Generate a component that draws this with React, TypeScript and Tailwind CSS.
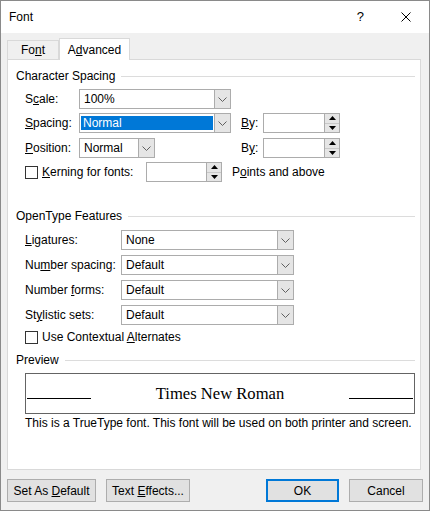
import React from 'react';

// Small down chevron used in combo buttons
function Chevron() {
  return (
    <svg width="9" height="5" viewBox="0 0 9 5" fill="none">
      <path d="M0.5 0.5 L4.5 4.5 L8.5 0.5" stroke="#606060" strokeWidth="1" />
    </svg>
  );
}

interface ComboProps {
  className: string;
  value: string;
  selected?: boolean;
}

function Combo({ className, value, selected = false }: ComboProps) {
  return (
    <div className={`flex h-[20px] border border-[#acacac] bg-white ${className}`}>
      <div className="flex-1 flex items-center pl-[1px] pr-[1px]">
        {selected ? (
          <span className="flex-1 h-[14px] leading-[14px] bg-[#0078d7] text-white pl-[2px]">{value}</span>
        ) : (
          <span className="pl-[3px]">{value}</span>
        )}
      </div>
      <div className="w-[16px] bg-[#e5e5e5] border-l border-[#acacac] flex items-center justify-center">
        <Chevron />
      </div>
    </div>
  );
}

function Spinner({ className }: { className: string }) {
  return (
    <div className={`flex h-[20px] border border-[#acacac] bg-white ${className}`}>
      <div className="flex-1" />
      <div className="w-[15px] flex flex-col border-l border-[#acacac] bg-[#e5e5e5]">
        <div className="flex-1 flex items-center justify-center border-b border-[#c8c8c8]">
          <svg width="7" height="4" viewBox="0 0 7 4">
            <path d="M0 4 L3.5 0 L7 4Z" fill="#000" />
          </svg>
        </div>
        <div className="flex-1 flex items-center justify-center">
          <svg width="7" height="4" viewBox="0 0 7 4">
            <path d="M0 0 L3.5 4 L7 0Z" fill="#000" />
          </svg>
        </div>
      </div>
    </div>
  );
}

function Checkbox() {
  return <div className="w-[13px] h-[13px] border border-[#333] bg-white shrink-0" />;
}

function GroupHeader({ children, className }: { children: React.ReactNode; className: string }) {
  return (
    <div className={`flex items-center h-[16px] pl-[8px] pr-[5px] ${className}`}>
      <span>{children}</span>
      <div className="flex-1 h-px bg-[#dcdcdc] ml-[6px]" />
    </div>
  );
}

function DialogButton({ className, children }: { className: string; children: React.ReactNode }) {
  return (
    <div className={`h-[23px] flex items-center justify-center bg-[#e1e1e1] ${className}`}>
      {children}
    </div>
  );
}

export default function App() {
  return (
    <div className="w-[430px] h-[511px] bg-[#f0f0f0] border border-[#8a8a8a] flex flex-col font-['Liberation_Sans',Arial,sans-serif] text-[12px] text-black">
      {/* Title bar */}
      <div className="h-[32px] bg-white flex items-center shrink-0">
        <span className="pl-[8px]">Font</span>
        <span className="ml-auto text-[13px]">?</span>
        <svg className="ml-[37px] mr-[18px]" width="10" height="10" viewBox="0 0 10 10">
          <path d="M0.5 0.5 L9.5 9.5 M9.5 0.5 L0.5 9.5" stroke="#000" strokeWidth="1" />
        </svg>
      </div>

      {/* Tabs */}
      <div className="h-[26px] flex items-end pl-[6px] shrink-0">
        <div className="w-[52px] h-[19px] border border-b-0 border-[#d9d9d9] bg-[#f0f0f0] flex items-center justify-center">
          <span>
            Fo<span className="underline">n</span>t
          </span>
        </div>
        <div className="relative z-10 -mb-px w-[71px] h-[22px] border border-b-0 border-[#d9d9d9] bg-white flex items-center justify-center">
          <span>
            A<span className="underline">d</span>vanced
          </span>
        </div>
      </div>

      {/* Tab panel */}
      <div className="ml-[6px] w-[414px] h-[411px] bg-white border border-[#d9d9d9] flex flex-col shrink-0">
        <GroupHeader className="mt-[8px]">Character Spacing</GroupHeader>

        <div className="mt-[5px] flex items-center h-[20px] pl-[17px]">
          <span className="w-[54px]">
            S<span className="underline">c</span>ale:
          </span>
          <Combo className="w-[152px]" value="100%" />
        </div>

        <div className="mt-[4px] flex items-center h-[20px] pl-[17px]">
          <span className="w-[54px]">
            <span className="underline">S</span>pacing:
          </span>
          <Combo className="w-[152px]" value="Normal" selected />
          <span className="ml-[10px] w-[22px]">
            <span className="underline">B</span>y:
          </span>
          <Spinner className="w-[77px]" />
        </div>

        <div className="mt-[5px] flex items-center h-[20px] pl-[17px]">
          <span className="w-[54px]">
            <span className="underline">P</span>osition:
          </span>
          <Combo className="w-[76px]" value="Normal" />
          <span className="ml-[86px] w-[22px]">
            B<span className="underline">y</span>:
          </span>
          <Spinner className="w-[77px]" />
        </div>

        <div className="mt-[4px] flex items-center h-[20px] pl-[17px]">
          <Checkbox />
          <span className="ml-[4px] w-[104px]">
            <span className="underline">K</span>erning for fonts:
          </span>
          <Spinner className="w-[76px]" />
          <span className="ml-[10px]">
            P<span className="underline">o</span>ints and above
          </span>
        </div>

        <GroupHeader className="mt-[26px]">OpenType Features</GroupHeader>

        <div className="mt-[6px] flex items-center h-[20px] pl-[17px]">
          <span className="w-[96px]">
            <span className="underline">L</span>igatures:
          </span>
          <Combo className="w-[173px]" value="None" />
        </div>

        <div className="mt-[5px] flex items-center h-[20px] pl-[17px]">
          <span className="w-[96px]">
            Nu<span className="underline">m</span>ber spacing:
          </span>
          <Combo className="w-[173px]" value="Default" />
        </div>

        <div className="mt-[5px] flex items-center h-[20px] pl-[17px]">
          <span className="w-[96px]">
            Number <span className="underline">f</span>orms:
          </span>
          <Combo className="w-[173px]" value="Default" />
        </div>

        <div className="mt-[5px] flex items-center h-[20px] pl-[17px]">
          <span className="w-[96px]">
            St<span className="underline">y</span>listic sets:
          </span>
          <Combo className="w-[173px]" value="Default" />
        </div>

        <div className="mt-[4px] flex items-center h-[16px] pl-[17px]">
          <Checkbox />
          <span className="ml-[4px]">
            Use Contextual <span className="underline">A</span>lternates
          </span>
        </div>

        <GroupHeader className="mt-[7px]">Preview</GroupHeader>

        <div className="mt-[5px] ml-[17px] w-[390px] h-[41px] border border-[#646464] flex items-baseline pt-[11px] px-[1px]">
          <span className="inline-block w-[64px] h-px bg-black" />
          <span className="flex-1 text-center text-[16.6px] leading-[17px] font-['Liberation_Serif','Times_New_Roman',serif]">
            Times New Roman
          </span>
          <span className="inline-block w-[64px] h-px bg-black" />
        </div>

        <div className="mt-[2px] h-[14px] leading-[14px] pl-[17px]">
          This is a TrueType font. This font will be used on both printer and screen.
        </div>
      </div>

      {/* Bottom buttons */}
      <div className="mt-[9px] flex items-center pl-[6px] pr-[6px]">
        <DialogButton className="w-[89px] border border-[#adadad]">
          <span>
            Set As <span className="underline">D</span>efault
          </span>
        </DialogButton>
        <DialogButton className="ml-[10px] w-[84px] border border-[#adadad]">
          <span>
            Text <span className="underline">E</span>ffects...
          </span>
        </DialogButton>
        <DialogButton className="ml-auto w-[73px] border-2 border-[#0078d7]">OK</DialogButton>
        <DialogButton className="ml-[10px] w-[74px] border border-[#adadad]">Cancel</DialogButton>
      </div>
    </div>
  );
}
